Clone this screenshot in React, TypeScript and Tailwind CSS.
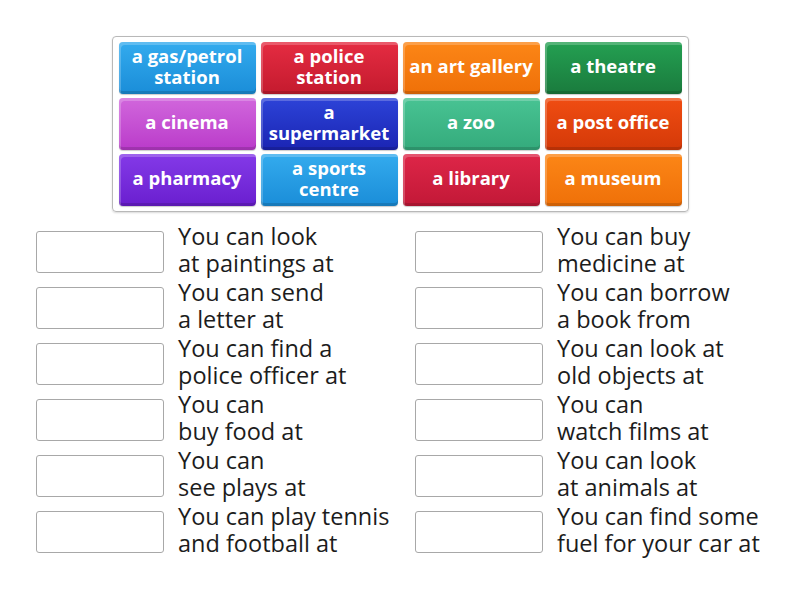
const tiles = [
  { label: "a gas/petrol station", cls: "from-[#33abee] to-[#1a8dd8]" },
  { label: "a police station", cls: "from-[#e52c42] to-[#c41a2e]" },
  { label: "an art gallery", cls: "from-[#fc8616] to-[#ef7008]" },
  { label: "a theatre", cls: "from-[#24a052] to-[#1a7b3d]" },
  { label: "a cinema", cls: "from-[#d166dc] to-[#ba3aca]" },
  { label: "a supermarket", cls: "from-[#2d43d8] to-[#1b24b3]" },
  { label: "a zoo", cls: "from-[#48c393] to-[#34ab7c]" },
  { label: "a post office", cls: "from-[#f04d12] to-[#d43908]" },
  { label: "a pharmacy", cls: "from-[#8439e8] to-[#6a1ecf]" },
  { label: "a sports centre", cls: "from-[#33abee] to-[#1a8dd8]" },
  { label: "a library", cls: "from-[#de2648] to-[#c21837]" },
  { label: "a museum", cls: "from-[#fc8616] to-[#ef7008]" },
];

const prompts: [string, string][] = [
  ["You can look", "at paintings at"],
  ["You can buy", "medicine at"],
  ["You can send", "a letter at"],
  ["You can borrow", "a book from"],
  ["You can find a", "police officer at"],
  ["You can look at", "old objects at"],
  ["You can", "buy food at"],
  ["You can", "watch films at"],
  ["You can", "see plays at"],
  ["You can look", "at animals at"],
  ["You can play tennis", "and football at"],
  ["You can find some", "fuel for your car at"],
];

function Tile({ label, cls }: { label: string; cls: string }) {
  return (
    <div
      className={`flex h-[52px] items-center justify-center rounded-[4px] bg-linear-to-b px-1 pb-[5px] text-center text-[18.5px] font-bold leading-[21px] text-white shadow-[inset_2px_3px_0_rgba(255,255,255,0.22),inset_0_-3px_0_rgba(0,0,0,0.14),0_1px_1px_rgba(0,0,0,0.2)] ${cls}`}
    >
      {label}
    </div>
  );
}

export default function App() {
  return (
    <div className="min-h-[600px] w-[800px] bg-white pt-[36px] font-['Open_Sans',sans-serif]">
      <div className="mx-auto w-[577px] rounded-[4px] border border-[#b8b8b8] px-[6px] pt-[5px] pb-[5px] shadow-[0_1px_2px_rgba(0,0,0,0.15)]">
        <div className="grid grid-cols-[repeat(4,137px)] gap-x-[5px] gap-y-[4px]">
          {tiles.map((t) => (
            <Tile key={t.label} label={t.label} cls={t.cls} />
          ))}
        </div>
      </div>

      <div className="mt-[12px] grid grid-cols-[379px_1fr] pl-[36px]">
        {prompts.map(([a, b]) => (
          <div key={a + b} className="flex h-[56px] items-center">
            <div className="h-[42px] w-[128px] shrink-0 rounded-[3px] border border-[#a8a8a8] bg-white" />
            <p className="mb-[5px] ml-[14px] text-[23.5px] leading-[27px] text-[#1c1c1c]">
              {a}
              <br />
              {b}
            </p>
          </div>
        ))}
      </div>
    </div>
  );
}
